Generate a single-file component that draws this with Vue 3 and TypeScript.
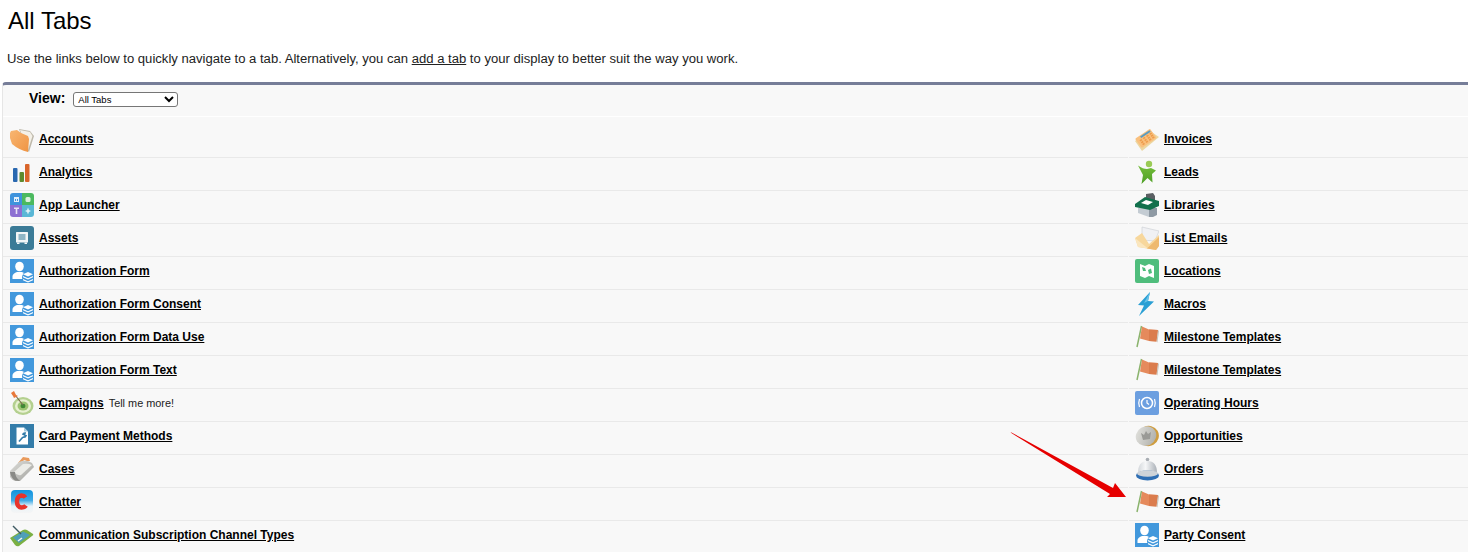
<template>
  <div class="page">
    <svg class="defs" width="0" height="0" aria-hidden="true">
      <defs>
        <linearGradient id="g-folder" x1="0" y1="0" x2="1" y2="1">
          <stop offset="0" stop-color="#f8b672" />
          <stop offset="1" stop-color="#ef9443" />
        </linearGradient>
        <linearGradient id="g-chatter" x1="0" y1="0" x2="0" y2="1">
          <stop offset="0" stop-color="#0f93de" />
          <stop offset="0.45" stop-color="#3eaae6" />
          <stop offset="0.7" stop-color="#e8f3f9" />
          <stop offset="1" stop-color="#f5f5f5" />
        </linearGradient>
        <linearGradient id="g-bell" x1="0" y1="0" x2="1" y2="0">
          <stop offset="0" stop-color="#d3d7db" />
          <stop offset="0.4" stop-color="#f6f7f8" />
          <stop offset="1" stop-color="#aab0b7" />
        </linearGradient>
        <linearGradient id="g-coin" x1="0" y1="0" x2="1" y2="1">
          <stop offset="0" stop-color="#e6e6e2" />
          <stop offset="1" stop-color="#a9a9a4" />
        </linearGradient>
        <linearGradient id="g-case" x1="0" y1="0" x2="1" y2="1">
          <stop offset="0" stop-color="#dededa" />
          <stop offset="1" stop-color="#a0a09c" />
        </linearGradient>
        <linearGradient id="g-lead" x1="0" y1="0" x2="0" y2="1">
          <stop offset="0" stop-color="#74bd3a" />
          <stop offset="1" stop-color="#4e9f26" />
        </linearGradient>
      </defs>
    </svg>

    <h1 class="title">All Tabs</h1>
    <p class="intro">
      Use the links below to quickly navigate to a tab. Alternatively, you can
      <a href="#" class="add-link">add a tab</a> to your display to better suit the way you work.
    </p>

    <div class="panel">
      <div class="view-bar">
        <label class="view-label" for="view">View:</label>
        <select id="view" class="view-select">
          <option>All Tabs</option>
        </select>
      </div>

      <div class="tab-grid">
        <div v-for="(tab, i) in tabs" :key="i" class="tab-cell" :class="{ first: i < 2 }">
          <svg class="icon" viewBox="0 0 24 24" width="24" height="24">
            <template v-if="tab.icon === 'folder'">
              <path d="M9 1 L20 3 L24 8 L19 24 L17 22 Z" fill="#bdb8aa" />
              <path d="M10 2 L20 4 L22.500 8 L18 22 Z" fill="#f4f1e8" />
              <path d="M0 5 L1 3 L7 2 L11 5 L18 8 L19 11 L18 24 Q9 22 2 16 L0 10 Z" fill="url(#g-folder)" />
            </template>
            <template v-else-if="tab.icon === 'analytics'">
              <rect x="3" y="8" width="4.500" height="14" rx="1" fill="#2a68b0" />
              <rect x="9.500" y="12" width="4.500" height="10" rx="1" fill="#5e8b2e" />
              <rect x="15" y="4" width="4.500" height="18" rx="1" fill="#d9652a" />
            </template>
            <template v-else-if="tab.icon === 'launcher'">
              <path d="M3 0 H12 V12 H0 V3 Q0 0 3 0 Z" fill="#3f93dc" />
              <path d="M12 0 H21 Q24 0 24 3 V12 H12 Z" fill="#4bb95f" />
              <path d="M0 12 H12 V24 H3 Q0 24 0 21 Z" fill="#8c70d2" />
              <path d="M12 12 H24 V21 Q24 24 21 24 H12 Z" fill="#59b7d6" />
              <path d="M4 4 H9 V9 H4 Z M5 6 V8 H6 V6 Z M7 6 V8 H8 V6 Z" fill="#fff" fill-rule="evenodd" opacity="0.85" />
              <rect x="15.500" y="4" width="5" height="5" rx="1.500" fill="#fff" opacity="0.8" />
              <path d="M4 14.500 H9 V16 H7.300 V21 H5.700 V16 H4 Z" fill="#fff" opacity="0.8" />
              <path d="M18 14.500 L19 17 L21 18 L19 19 L18 21.500 L17 19 L15 18 L17 17 Z" fill="#fff" opacity="0.8" />
            </template>
            <template v-else-if="tab.icon === 'assets'">
              <rect width="24" height="24" rx="3" fill="#3b7b97" />
              <rect x="6" y="6" width="12" height="10.500" rx="0.500" fill="#f2f6f7" />
              <rect x="8.500" y="8" width="7" height="6" fill="#8fb6c6" />
              <rect x="7" y="16.500" width="2.500" height="1.500" fill="#f2f6f7" />
              <rect x="14.500" y="16.500" width="2.500" height="1.500" fill="#f2f6f7" />
            </template>
            <template v-else-if="tab.icon === 'person'">
              <rect width="24" height="24" fill="#4298dc" />
              <ellipse cx="9.500" cy="7.500" rx="4.300" ry="4.800" fill="#fff" />
              <path d="M2.500 20 V17 Q3 14.500 7 13 H12 Q15 14 16 16 V20 Z" fill="#fff" />
              <circle cx="18" cy="18.500" r="6" fill="#4298dc" />
              <path d="M18 13 L23 15.300 L18 17.600 L13 15.300 Z" fill="#fff" />
              <path d="M13 17 L18 19.300 L23 17 V18.300 L18 20.600 L13 18.300 Z" fill="#fff" />
              <path d="M13 20 L18 22.200 L23 20 V21.300 L18 23.600 L13 21.300 Z" fill="#fff" />
            </template>
            <template v-else-if="tab.icon === 'target'">
              <ellipse cx="13" cy="15" rx="10.500" ry="9" fill="#b4d08f" />
              <ellipse cx="13" cy="15" rx="8" ry="6.800" fill="#e8f1d2" />
              <ellipse cx="13" cy="15" rx="5.500" ry="4.600" fill="#9cc472" />
              <ellipse cx="13" cy="15" rx="2.500" ry="2.200" fill="#3f8a35" />
              <path d="M5 4 L13 14" stroke="#7b6a50" stroke-width="1.200" />
              <path d="M1 2 L4 0 L6 4 L8 5 L4 7 L3 5 Z" fill="#e8783a" />
            </template>
            <template v-else-if="tab.icon === 'card'">
              <rect width="24" height="24" fill="#337ca9" />
              <path d="M6.500 3.500 H14 L18 7.500 V20.500 H6.500 Z" fill="#fff" />
              <path d="M14 3.500 L18 7.500 H14 Z" fill="#a9cde0" />
              <path d="M9 17.500 L13 13 M13 11 Q13 9 15 9 L14.500 11 L16 11.500 Q15.500 13.500 13 13" stroke="#337ca9" stroke-width="1.700" fill="none" />
            </template>
            <template v-else-if="tab.icon === 'cases'">
              <path d="M8 6 L13 0 L19 1 L20 4 L17 4 L14 3 L11 7 Z" fill="#e99a5b" />
              <path d="M0 14 L9 5 Q16 2 22 6 L24 10 L10 24 Q3 25 0 20 Z" fill="url(#g-case)" />
              <path d="M4 15 L13 7 Q18 6 22 8 L11 18 Q7 19 4 15 Z" fill="#ecece8" />
              <path d="M0 15 Q1 21 5 23.500 L10 24 Q5 20 5 15 Z" fill="#8a8a86" />
            </template>
            <template v-else-if="tab.icon === 'chatter'">
              <rect x="1" y="0" width="22" height="23" rx="4" fill="url(#g-chatter)" />
              <path d="M15.500 7.500 Q14 5.500 11.500 5.500 Q7 6 7 11.500 Q7 17 11.500 17.500 Q14.500 17.500 16 15.500" stroke="#e8342c" stroke-width="4.500" fill="none" />
            </template>
            <template v-else-if="tab.icon === 'comm'">
              <path d="M0 15 L13 7 Q15 6 17 7 L23 11 Q24 12 22 13 L9 23 Q7 24 5 22 Z" fill="#7bb043" />
              <path d="M3 14.500 L13 8.500 L20 12 L9 20 Z" fill="#4f9fb8" />
              <path d="M3 3 L11 11" stroke="#3f5a62" stroke-width="1.500" />
              <path d="M8 18 L12 15" stroke="#f6f6ee" stroke-width="1.500" />
            </template>
            <template v-else-if="tab.icon === 'calc'">
              <path d="M0 13 L15 3 L24 9 L7 23 Z" fill="#ecd6a0" />
              <g transform="matrix(1.500 -1 0.670 0.930 0 10.700)">
                <rect width="10" height="10" rx="0.800" fill="#f9c07e" />
                <rect x="3" y="0.800" width="6.300" height="1.800" fill="#5a9bc0" />
                <g fill="#ed9c4c">
                  <rect v-for="key in calcKeys" :key="`${key.x}-${key.y}`" :x="key.x" :y="key.y" width="1.300" height="1.400" />
                </g>
              </g>
            </template>
            <template v-else-if="tab.icon === 'lead'">
              <circle cx="14" cy="4" r="3.200" fill="#9acb55" />
              <path d="M3 5.500 Q8 9 12 9 L16 8 L21 10.500 L17 14 L17.500 22.500 L12.500 18 L6.500 24 L8 15 Z" fill="url(#g-lead)" />
            </template>
            <template v-else-if="tab.icon === 'library'">
              <path d="M11 1 L18 0 L20 3 V10 H11 Z" fill="#5a5f63" />
              <path d="M3 15 H20 V22 L17 24 H14 L3 20 Z" fill="#c4ccd3" />
              <path d="M14 15 H22 V22 L18 24 H14 Z" fill="#8f9aa4" />
              <path d="M0 11 L10 4 L24 8 V13 L15 17 L0 14 Z" fill="#12704c" />
              <path d="M6 10 L11 7 L18 9 L13 12 Z" fill="#fff" />
            </template>
            <template v-else-if="tab.icon === 'mail'">
              <path d="M7 1 L24 5 L20 15 L7 14 Z" fill="#f0f1f4" stroke="#c9ccd2" stroke-width="0.600" />
              <path d="M0 12 L7 7 L14 18 L24 9 V20 L21 24 L3 21 Z" fill="#f7d79c" />
              <path d="M0 12 L13 22.500 L3 21 Z" fill="#fae6be" />
              <path d="M12 22.500 L24 11 V20 L21 24 Z" fill="#eeb96f" />
            </template>
            <template v-else-if="tab.icon === 'location'">
              <rect width="24" height="24" rx="2" fill="#4fbd7c" />
              <path d="M5 5 L10 7 L14 5 L19 7 V19 L14 17 L10 19 L5 17 Z" fill="#fff" />
              <path d="M7 8 L10 9 L11 12 L8 12 Z M13 11 L16 9.500 L17 14 L14 15 Z" fill="#4fbd7c" />
            </template>
            <template v-else-if="tab.icon === 'macro'">
              <path d="M15 0 L3 13 L9 13.500 L4 24 L19 9.500 L13 9 Z" fill="#2a9fd4" />
              <path d="M15 0 L9 11 L13 9 Z" fill="#67c2e8" />
            </template>
            <template v-else-if="tab.icon === 'flag'">
              <path d="M6.500 1 L2 22" stroke="#8ab36c" stroke-width="1.500" />
              <path d="M7 1.500 L14 4.500 L23 5 L21.500 16.500 L14 16 L5 13.500 Z" fill="#e58a5c" />
              <path d="M14 4.500 L23 5 L21.500 16.500 L14 16 Z" fill="#db7c4d" />
              <path d="M23 5 L24 6 L22.500 17.500 L21.500 16.500 Z" fill="#c9c5bc" />
            </template>
            <template v-else-if="tab.icon === 'clock'">
              <rect width="24" height="24" rx="2" fill="#6c9fe0" />
              <circle cx="12" cy="12" r="5.500" fill="none" stroke="#fff" stroke-width="1.500" />
              <path d="M12 9 V12 L14 13.500" fill="none" stroke="#fff" stroke-width="1.200" />
              <path d="M4.500 8 Q3 12 4.500 16 M19.500 8 Q21 12 19.500 16" fill="none" stroke="#fff" stroke-width="1.200" />
            </template>
            <template v-else-if="tab.icon === 'coin'">
              <ellipse cx="13.500" cy="12" rx="10.500" ry="10" fill="#cf9d3f" transform="rotate(-30 13.500 12)" />
              <ellipse cx="11" cy="12" rx="10.500" ry="9.500" fill="url(#g-coin)" transform="rotate(-30 11 12)" />
              <path d="M6 9 L9 11 L11 7 L13 10 L16 8 L15 15 L8 16 Z" fill="#9a9a96" />
            </template>
            <template v-else-if="tab.icon === 'bell'">
              <circle cx="12.500" cy="2.500" r="1.800" fill="#a8adb3" />
              <path d="M3 16 Q3 4 12.500 4 Q22 4 22 16 Z" fill="url(#g-bell)" />
              <ellipse cx="12.500" cy="18.500" rx="11.500" ry="5" fill="#2f6fb4" />
              <ellipse cx="12.500" cy="16.500" rx="10.500" ry="3.200" fill="#cfd4d9" />
            </template>
          </svg>
          <a href="#" class="tab-link">{{ tab.name }}</a>
          <span v-if="tab.hint" class="hint">{{ tab.hint }}</span>
        </div>
      </div>
    </div>

    <svg class="arrow" viewBox="0 0 130 80" width="130" height="80">
      <path d="M0.500 0.500 L1.500 0.500 L103 56 L105 51 L116 65 L97 65 L100 62 Z" fill="#e60000" />
    </svg>
  </div>
</template>

<script setup lang="ts">
interface Tab {
  name: string
  icon: string
  hint?: string
}

// left and right column, read across row by row
const tabs: Tab[] = [
  { name: 'Accounts', icon: 'folder' },
  { name: 'Invoices', icon: 'calc' },
  { name: 'Analytics', icon: 'analytics' },
  { name: 'Leads', icon: 'lead' },
  { name: 'App Launcher', icon: 'launcher' },
  { name: 'Libraries', icon: 'library' },
  { name: 'Assets', icon: 'assets' },
  { name: 'List Emails', icon: 'mail' },
  { name: 'Authorization Form', icon: 'person' },
  { name: 'Locations', icon: 'location' },
  { name: 'Authorization Form Consent', icon: 'person' },
  { name: 'Macros', icon: 'macro' },
  { name: 'Authorization Form Data Use', icon: 'person' },
  { name: 'Milestone Templates', icon: 'flag' },
  { name: 'Authorization Form Text', icon: 'person' },
  { name: 'Milestone Templates', icon: 'flag' },
  { name: 'Campaigns', icon: 'target', hint: 'Tell me more!' },
  { name: 'Operating Hours', icon: 'clock' },
  { name: 'Card Payment Methods', icon: 'card' },
  { name: 'Opportunities', icon: 'coin' },
  { name: 'Cases', icon: 'cases' },
  { name: 'Orders', icon: 'bell' },
  { name: 'Chatter', icon: 'chatter' },
  { name: 'Org Chart', icon: 'flag' },
  { name: 'Communication Subscription Channel Types', icon: 'comm' },
  { name: 'Party Consent', icon: 'person' },
]

// calculator buttons, in the icon's own skewed 10x10 space
const calcKeys = [1.5, 3.7, 5.9, 8].flatMap((x) => [3.3, 5.3, 7.3].map((y) => ({ x, y })))
</script>

<style>
html,
body {
  margin: 0;
  background: #fff;
  overflow: hidden;
}
</style>

<style scoped>
.page {
  position: relative;
  height: 552px;
  overflow: hidden;
  font-family: 'Liberation Sans', Arial, sans-serif;
  color: #000;
}

.defs {
  position: absolute;
}

.title {
  margin: 0;
  padding: 6px 0 0 8px;
  font-size: 24px;
  line-height: 30px;
  font-weight: 400;
}

.intro {
  margin: 0;
  padding: 15px 0 0 7px;
  font-size: 13.090px;
  line-height: 16px;
  color: #222;
}

.add-link {
  color: #222;
  text-decoration: underline;
}

.panel {
  margin: 15px 0 0 2px;
  border-top: 3px solid #767d98;
  border-left: 1px solid #e6e6e6;
  border-radius: 4px 0 0 0;
  background: #f8f8f8;
}

.view-bar {
  display: flex;
  align-items: center;
  box-sizing: border-box;
  height: 32px;
  padding: 0 0 5px 26px;
  border-bottom: 1px solid #fff;
}

.view-label {
  font-size: 14px;
  font-weight: 700;
  margin-right: 8px;
}

.view-select {
  width: 105px;
  height: 15px;
  margin-top: 2px;
  padding: 0;
  font-family: 'Liberation Sans', Arial, sans-serif;
  font-size: 9.500px;
  color: #000;
  background: #fff;
  border: 1px solid #767676;
  border-radius: 3px;
}

.tab-grid {
  display: grid;
  grid-template-columns: 1125px 1fr;
  column-gap: 1px;
}

.tab-cell {
  display: flex;
  align-items: center;
  height: 33px;
  box-sizing: border-box;
  padding: 0 0 4px 6px;
  border-top: 1px solid #e9e9e9;
}

.tab-cell:nth-child(odd) {
  padding-left: 7px;
}

.tab-cell.first {
  height: 40px;
  padding-top: 4px;
  padding-bottom: 0;
  border-top: none;
}

.tab-cell.first .icon {
  margin-top: 2px;
}

.icon {
  flex: none;
  margin-right: 5px;
}

.tab-link {
  font-size: 12px;
  font-weight: 700;
  color: #000;
  text-decoration: underline;
}

.hint {
  margin-left: 5px;
  font-size: 10.900px;
  color: #222;
}

.arrow {
  position: absolute;
  left: 1010px;
  top: 432px;
}
</style>
